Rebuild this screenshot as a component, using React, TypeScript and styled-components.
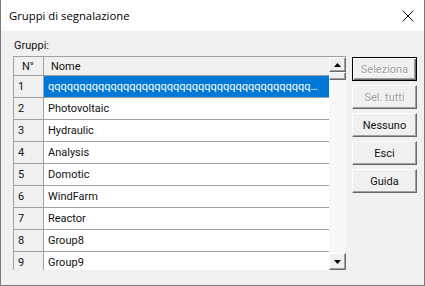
import styled, { createGlobalStyle } from "styled-components"

const GlobalStyle = createGlobalStyle`
    html, body {
        margin : 0;
        padding : 0;
        background : #f0f0f0;
        overflow : hidden;
    }
    * { box-sizing : border-box; }
`

const rows = [
    "qqqqqqqqqqqqqqqqqqqqqqqqqqqqqqqqqqqqqqqqqqqqqqqqqqqqqqqqqqqqqq",
    "Photovoltaic",
    "Hydraulic",
    "Analysis",
    "Domotic",
    "WindFarm",
    "Reactor",
    "Group8",
    "Group9",
]

const buttons = [
    { label : "Seleziona", disabled : true, focused : true },
    { label : "Sel. tutti", disabled : true, focused : false },
    { label : "Nessuno", disabled : false, focused : false },
    { label : "Esci", disabled : false, focused : false },
    { label : "Guida", disabled : false, focused : false },
]

export default function App() {
    return (
        <>
            <GlobalStyle />
            <Window>
                <TitleBar>
                    <Title>Gruppi di segnalazione</Title>
                    <CloseBtn>
                        <svg width="12" height="12" viewBox="0 0 12 12">
                            <path d="M0.5 0.5 L11.5 11.5 M11.5 0.5 L0.5 11.5" stroke="#111" strokeWidth="1" fill="none" />
                        </svg>
                    </CloseBtn>
                </TitleBar>
                <Body>
                    <Label>Gruppi:</Label>
                    <Main>
                        <Grid>
                            <Table>
                                <HeaderRow>
                                    <NumCell header>N°</NumCell>
                                    <NameCell header><CellText>Nome</CellText></NameCell>
                                </HeaderRow>
                                {rows.map((name, i) => (
                                    <Row key={i}>
                                        <NumCell>{i + 1}</NumCell>
                                        <NameCell selected={i === 0}><CellText>{name}</CellText></NameCell>
                                    </Row>
                                ))}
                            </Table>
                            <ScrollBar>
                                <ArrowBtn h={15}>
                                    <svg width="7" height="4" viewBox="0 0 7 4"><path d="M3.5 0 L7 4 L0 4 Z" fill="#000" /></svg>
                                </ArrowBtn>
                                <Thumb />
                                <Track />
                                <ArrowBtn h={17}>
                                    <svg width="7" height="4" viewBox="0 0 7 4"><path d="M0 0 L7 0 L3.5 4 Z" fill="#000" /></svg>
                                </ArrowBtn>
                            </ScrollBar>
                        </Grid>
                        <Buttons>
                            {buttons.map(b => (
                                <Button key={b.label} disabled={b.disabled} focused={b.focused}>{b.label}</Button>
                            ))}
                        </Buttons>
                    </Main>
                </Body>
            </Window>
        </>
    )
}

const Window = styled.div`
    width : 425px;
    height : 286px;
    border : 1px solid #7a7a7a;
    border-top : none;
    background : #f0f0f0;
    display : flex;
    flex-direction : column;
    font-family : Roboto, "Liberation Sans", Arial, sans-serif;
    font-size : 11px;
    color : #111;
`

const TitleBar = styled.div`
    height : 31px;
    background : #fff;
    display : flex;
    align-items : center;
    justify-content : space-between;
    padding : 0 9px 0 8px;
`

const Title = styled.div`
    font-family : "Open Sans", "Noto Sans", sans-serif;
    font-size : 11.3px;
    color : #000;
`

const CloseBtn = styled.div`
    width : 12px;
    height : 12px;
    display : flex;
    margin-right : 1px;
`

const Body = styled.div`
    flex : 1;
    padding : 8px 0 0 12px;
`

const Label = styled.div`
    height : 13px;
    line-height : 13px;
    margin : 0 0 4px 1px;
`

const Main = styled.div`
    display : flex;
    align-items : flex-start;
`

const Grid = styled.div`
    width : 333px;
    height : 214px;
    border-left : 1px solid #a0a0a0;
    border-top : 1px solid #a0a0a0;
    display : flex;
    overflow : hidden;
`

const Table = styled.div`
    flex : 1;
    min-width : 0;
    background : #fff;
`

const HeaderRow = styled.div`
    display : flex;
    height : 19px;
    border-bottom : 1px solid #a0a0a0;
    background : #f0f0f0;
`

const Row = styled.div`
    display : flex;
    height : 22px;
    border-bottom : 1px solid #a0a0a0;
`

const NumCell = styled.div<{ header? : boolean }>`
    width : 30px;
    flex : none;
    border-right : 1px solid #a0a0a0;
    background : #f0f0f0;
    display : flex;
    align-items : center;
    padding-left : ${({ header }) => header ? "8px" : "4px"};
`

const NameCell = styled.div<{ header? : boolean, selected? : boolean }>`
    flex : 1;
    min-width : 0;
    overflow : hidden;
    display : flex;
    align-items : center;
    padding : 0 7px 0 ${({ header }) => header ? "7px" : "4px"};
    background : ${({ header, selected }) => selected ? "#0078d7" : header ? "#f0f0f0" : "#fff"};
    color : ${({ selected }) => selected ? "#fff" : "#111"};
`

const CellText = styled.span`
    display : block;
    flex : 1;
    min-width : 0;
    white-space : nowrap;
    overflow : hidden;
    text-overflow : ellipsis;
`

const ScrollBar = styled.div`
    width : 17px;
    flex : none;
    display : flex;
    flex-direction : column;
`

const ArrowBtn = styled.div<{ h : number }>`
    height : ${({ h }) => h}px;
    flex : none;
    background : #f0f0f0;
    border : 1px solid;
    border-color : #fff #696969 #696969 #fff;
    box-shadow : inset -1px -1px 0 #a0a0a0;
    display : flex;
    align-items : center;
    justify-content : center;
`

const Thumb = styled.div`
    height : 8px;
    flex : none;
    background : #f0f0f0;
    border : 1px solid;
    border-color : #fff #696969 #696969 #fff;
    box-shadow : inset -1px -1px 0 #a0a0a0;
`

const Track = styled.div`
    flex : 1;
    background : repeating-conic-gradient(#f0f0f0 0 25%, #fff 0 50%) 0 0 / 2px 2px;
`

const Buttons = styled.div`
    margin : 1px 0 0 6px;
    display : flex;
    flex-direction : column;
    gap : 4px;
`

const Button = styled.div<{ disabled? : boolean, focused? : boolean }>`
    width : 65px;
    height : 24px;
    display : flex;
    align-items : center;
    justify-content : center;
    background : #f0f0f0;
    border : 1px solid;
    border-color : ${({ focused }) => focused ? "#000" : "#fff #696969 #696969 #fff"};
    box-shadow : ${({ focused }) => focused
        ? "inset 1px 1px 0 #fff, inset -1px -1px 0 #696969, inset -2px -2px 0 #a0a0a0"
        : "inset -1px -1px 0 #a0a0a0"};
    color : ${({ disabled }) => disabled ? "#a0a0a0" : "#111"};
    text-shadow : ${({ disabled }) => disabled ? "1px 1px 0 #fff" : "none"};
`
